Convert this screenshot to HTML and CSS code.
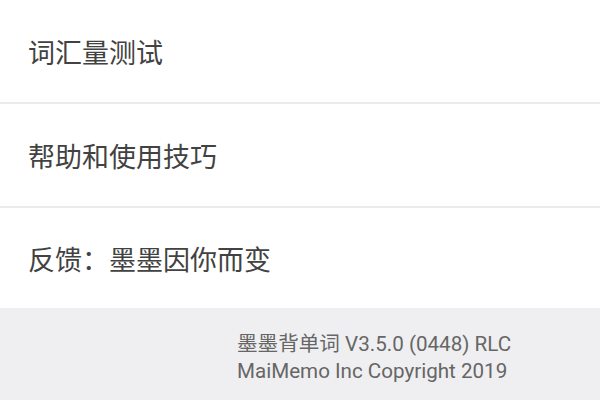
FILE: index.html
```html
<!DOCTYPE html>
<html lang="zh-CN">
<head>
<meta charset="utf-8">
<link rel="stylesheet" href="styles.css">
</head>
<body>
<div class="page">
  <div class="list">
    <div class="row">词汇量测试</div>
    <div class="row">帮助和使用技巧</div>
    <div class="row last">反馈：墨墨因你而变</div>
  </div>
  <div class="footer">
    <div class="info">
      <div class="line">墨墨背单词 V3.5.0 (0448) RLC</div>
      <div class="line">MaiMemo Inc Copyright 2019</div>
    </div>
  </div>
</div>
</body>
</html>
```
FILE: styles.css
```css
html, body {
  margin: 0;
  padding: 0;
  width: 600px;
  height: 400px;
  overflow: hidden;
  background: #efeff1;
}
.page {
  display: flex;
  flex-direction: column;
  height: 400px;
}
.list {
  background: #ffffff;
}
.row {
  height: 102px;
  border-bottom: 2px solid #ebebeb;
  display: flex;
  align-items: center;
  padding-left: 28px;
  font-family: "Noto Sans CJK SC", "Noto Sans", sans-serif;
  font-size: 27px;
  color: #424242;
  box-sizing: content-box;
}
.row.last {
  height: 100px;
  border-bottom: none;
}
.footer {
  flex: 1;
  background: #efeff1;
  padding-top: 23px;
  padding-left: 237px;
}
.line {
  font-family: Roboto, "Noto Sans CJK SC", sans-serif;
  font-size: 20.6px;
  line-height: 27px;
  color: #666666;
  white-space: nowrap;
}
```
